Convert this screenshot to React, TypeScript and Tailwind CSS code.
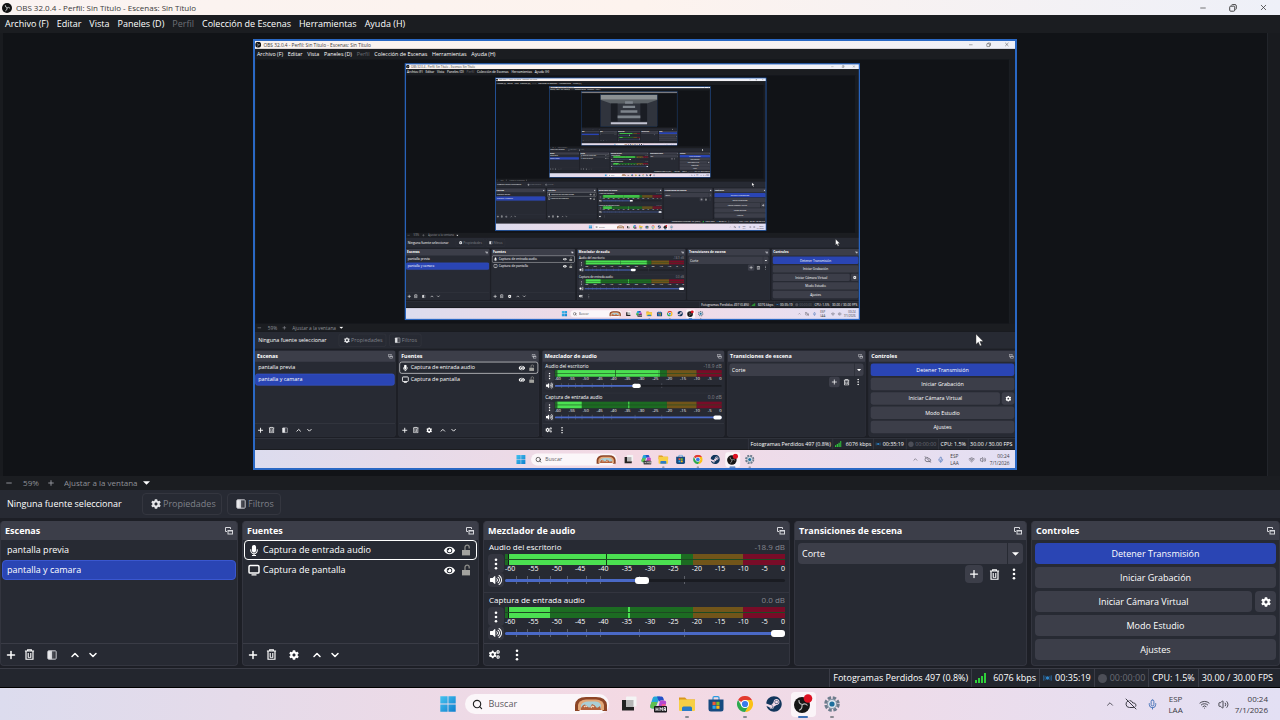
import { useId, useLayoutEffect, useRef, useState } from 'react';
import type { ReactNode } from 'react';
import { ChevronDown, ChevronUp, Minus, Plus, Search, Wifi, Volume2, X, Mic, CloudOff } from 'lucide-react';
import { FaCog, FaCogs, FaEye, FaMicrophone, FaSteam, FaVolumeUp } from 'react-icons/fa';

const MAX_DEPTH = 5;
const SCREEN_W = 1280;
const SCREEN_H = 720;

const MENUS = ['Archivo (F)', 'Editar', 'Vista', 'Paneles (D)', 'Perfil', 'Colección de Escenas', 'Herramientas', 'Ayuda (H)'];
const SCENES = ['pantalla previa', 'pantalla y camara'];
const SCALE = ['-60', '-55', '-50', '-45', '-40', '-35', '-30', '-25', '-20', '-15', '-10', '-5', '0'];
const FADER_TICKS = [4, 8, 12, 16, 22, 29, 34, 48, 64];

interface Channel {
  name: string;
  db: string;
  volume: number;
  level: number;
  peak: number;
  notch?: number;
}

const CHANNELS: Channel[] = [
  { name: 'Audio del escritorio', db: '-18.9 dB', volume: 49, level: 61, peak: 62, notch: 36 },
  { name: 'Captura de entrada audio', db: '0.0 dB', volume: 100, level: 15, peak: 44 },
];

/* ── small icons ─────────────────────────────────── */
const TrashIcon = () => (
  <svg viewBox="0 0 12 12" className="w-[11px] h-[11px]" fill="none" stroke="currentColor">
    <path d="M1 2.2h10M4 2V.8h4V2M2.2 2.5v8.7h7.6V2.5" strokeWidth="1.3" />
    <path d="M4.6 4.4v4.8M7.4 4.4v4.8" strokeWidth="1.2" />
    <path d="M4.4 9.2h3.4" strokeWidth="0.8" />
  </svg>
);

const FilterIcon = () => (
  <svg viewBox="0 0 12 12" className="w-[10px] h-[10px]">
    <defs>
      <linearGradient id="filterFade" x1="0" x2="1">
        <stop offset="0" stopColor="#fff" />
        <stop offset="0.45" stopColor="#d0d1d6" />
        <stop offset="0.5" stopColor="#55575f" />
        <stop offset="1" stopColor="#2a2c34" />
      </linearGradient>
    </defs>
    <rect x="1" y="1" width="10" height="10" rx="1" fill="url(#filterFade)" stroke="#c9cad0" strokeWidth="1.2" />
  </svg>
);

const KebabIcon = () => (
  <svg viewBox="0 0 4 12" className="w-1 h-3" fill="currentColor">
    <circle cx="2" cy="1.7" r="1.3" />
    <circle cx="2" cy="6" r="1.3" />
    <circle cx="2" cy="10.3" r="1.3" />
  </svg>
);

const PopoutIcon = () => (
  <svg viewBox="0 0 8 8" className="w-2 h-2" fill="none" stroke="#d6d7dc" strokeWidth="1">
    <path d="M2 4.5H.5v-4h5V2" />
    <rect x="3" y="3.5" width="4.5" height="3.5" />
    <path d="M3 4h4.5" />
  </svg>
);

const UnlockIcon = () => (
  <svg viewBox="0 0 10 12" className="w-[10px] h-3">
    <path d="M4 6V3.2a2.1 2.1 0 0 1 4.2 0V4.6" fill="none" stroke="#8b8b88" strokeWidth="1.3" />
    <rect x="1" y="6" width="8" height="5.4" fill="#a3a39f" />
  </svg>
);

const MonitorIcon = () => (
  <svg viewBox="0 0 12 12" className="w-3 h-3">
    <rect x="1" y="1.5" width="10" height="7.6" rx="1.2" fill="none" stroke="#fff" strokeWidth="1.5" />
    <path d="M3.5 10.8h5" stroke="#fff" strokeWidth="1.3" />
  </svg>
);

const CaretIcon = () => (
  <svg viewBox="0 0 8 4" className="w-[7px] h-1" fill="#fff">
    <path d="M0 0h8L4 4z" />
  </svg>
);

const RestoreIcon = () => (
  <svg viewBox="0 0 8 8" className="w-2 h-2" fill="none" stroke="#333" strokeWidth="0.9">
    <rect x="0.7" y="2.2" width="5" height="5" rx="1" />
    <path d="M2.4 1.4q.2-.8 1-.8H6q1.3 0 1.3 1.3v2.6q0 .8-.8 1" />
  </svg>
);

const ObsIcon = () => (
  <svg viewBox="0 0 18 18" className="w-[10px] h-[10px]">
    <circle cx="9" cy="9" r="9" fill="#111" />
    <path d="M9.500 8.500Q5.500 8 6 4M9 9q3-2.500 5.500.5M9 9q.5 4-3 5.200" fill="none" stroke="#d8d8d8" strokeWidth="1.500" />
  </svg>
);

/* ── taskbar icons ───────────────────────────────── */
const WindowsIcon = () => (
  <svg viewBox="0 0 16 16" className="w-4 h-4">
    <defs>
      <linearGradient id="winBlue" x1="0" y1="0" x2="1" y2="1">
        <stop offset="0" stopColor="#45c3ef" />
        <stop offset="1" stopColor="#0f7fce" />
      </linearGradient>
    </defs>
    <path d="M.3.3h7.3v7.3H.3zM8.4.3h7.3v7.3H8.4zM.3 8.4h7.3v7.3H.3zM8.4 8.4h7.3v7.3H8.4z" fill="url(#winBlue)" />
  </svg>
);

const SearchArt = () => (
  <svg viewBox="0 0 34 16" className="w-[34px] h-4">
    <path d="M1 15V9Q2 1 12 1h10q10 0 11 8v6h-4l-2-2H7l-2 2z" fill="#8c4526" />
    <path d="M4 14V9q1-5 8-5.500h10q7 .5 8 5.500v5z" fill="#e2a878" />
    <path d="M7 13V9q2-3.500 7-3.500h7q5 0 6 4V13z" fill="#a9cfd6" />
    <path d="M7 12q3-6 6-2t5-2q3 1 4 3t4-1l1 4H7z" fill="#b4623c" />
    <path d="M10 11q2-2 3 0M17 12q1-3 3-1" stroke="#f6dcc0" strokeWidth="1.2" fill="none" />
  </svg>
);

const TaskViewIcon = () => (
  <svg viewBox="0 0 16 16" className="w-4 h-4">
    <rect x="5" y="0.500" width="10.500" height="10" rx="1" fill="#f4f4f4" />
    <path d="M1 4h4v7h8v3.500H1z" fill="#222" />
    <rect x="5" y="4" width="7.500" height="7" fill="#b6b6b6" />
  </svg>
);

const CopilotIcon = () => (
  <svg viewBox="0 0 18 18" className="w-[18px] h-[18px]">
    <path d="M5.500 1.500h5.500L8 9l-2 4.500H3.500q-3 0-2-3.500L3.500 3.500q.5-2 2-2z" fill="#23a7d8" />
    <path d="M1.300 10.500 2.500 7h6L6 13.500H3.500q-3 0-2.200-3z" fill="#5fbf4f" />
    <path d="M8 1.500h4.500q1.500 0 2 2l.5 2h-3q-1.500 0-2 1.500z" fill="#2450c8" />
    <path d="M12 5.500h2.800q3 0 2.200 3l-1.500 5H9l1.500-6q.5-2 1.500-2z" fill="#b548cf" />
    <path d="M13 9h3.800l-1.300 4H12z" fill="#ec5a8d" />
    <rect x="5" y="11" width="13" height="6.500" rx="1" fill="#17171b" />
    <path d="M7 12.500v3.500M7 14.200h2M9 12.500v3.500M11 16v-3.500l1.200 2 1.200-2V16M15 16v-3.500h1.500V16M15 14.500h1.500" stroke="#fff" strokeWidth="0.8" fill="none" />
  </svg>
);

const FolderIcon = () => (
  <svg viewBox="0 0 18 16" className="w-[18px] h-4">
    <path d="M1 1.500h6l2 2h8v4H1z" fill="#d9971c" />
    <rect x="1" y="3.500" width="16" height="11.500" rx="1" fill="#f7cf45" />
    <path d="M4 15v-3q0-1.500 1.500-1.500h7Q14 10.500 14 12v3z" fill="#2a7bc8" />
  </svg>
);

const StoreIcon = () => (
  <svg viewBox="0 0 16 16" className="w-4 h-4">
    <path d="M5 4V2q0-1.300 1.300-1.300h3.400Q11 .7 11 2v2" fill="none" stroke="#2b9be0" strokeWidth="1.200" />
    <path d="M.5 3.500h15V13q0 2.500-2.500 2.500H3Q.5 15.500.5 13z" fill="#164a80" />
    <path d="M4.500 5.800h3.200V9H4.500z" fill="#ef5b35" />
    <path d="M8.300 5.800h3.200V9H8.300z" fill="#7fba28" />
    <path d="M4.500 9.600h3.200v3.200H4.500z" fill="#2fa8ea" />
    <path d="M8.300 9.600h3.200v3.200H8.300z" fill="#fdb913" />
  </svg>
);

const ChromeIcon = () => (
  <svg viewBox="0 0 48 48" className="w-4 h-4">
    <path d="M24 24 3.200 12A24 24 0 0 1 44.800 12z" fill="#e33b2e" />
    <path d="M24 12h20.800A24 24 0 0 1 24 48L34.400 30z" fill="#fbc116" />
    <path d="M13.600 30 3.200 12A24 24 0 0 0 24 48l10.400-18z" fill="#2da94f" />
    <circle cx="24" cy="24" r="12" fill="#fff" />
    <circle cx="24" cy="24" r="9.300" fill="#3a7bea" />
  </svg>
);

const ObsTaskIcon = () => (
  <svg viewBox="0 0 20 20" className="w-5 h-5">
    <circle cx="9" cy="11" r="8" fill="#161616" />
    <path d="M9.500 10.500Q5.500 10 6 6M9 11q3-2.500 5.500.5M9 11q.5 4-3 5.200" fill="none" stroke="#b9b9b9" strokeWidth="1.100" />
    <circle cx="15" cy="4.500" r="4.300" fill="#dd1122" />
  </svg>
);

const SettingsIcon = () => (
  <svg viewBox="0 0 16 16" className="w-4 h-4">
    <circle cx="8" cy="8" r="6.300" fill="none" stroke="#6c7c8c" strokeWidth="3" strokeDasharray="3.300 1.648" />
    <circle cx="8" cy="8" r="5" fill="#8496a6" />
    <circle cx="8" cy="8" r="4" fill="#dfe7ee" />
    <circle cx="8" cy="8" r="2.600" fill="#1c6e9c" />
  </svg>
);

/* ── preview with the captured screen inside ─────── */
// Deepest level: the copies are too small to read, so only their silhouette is drawn
const TunnelEnd = () => (
  <svg viewBox="0 0 764 430" className="w-full h-full">
    <rect width="764" height="430" fill="#30343d" />
    <path d="M0 0h764v70H0z" fill="#8b9093" />
    <path d="M0 70h764L620 120H140z" fill="#5b6166" />
    <path d="M140 120h90v240h-90zM534 120h90v240h-90z" fill="#1a1d24" />
    <path d="M330 90h104v34H330zM300 150h164v30H300zM270 210h224v32H270zM230 280h304v36H230z" fill="#7d848c" />
    <path d="M140 370h484v26H140z" fill="#c4c4d2" />
  </svg>
);

const Preview = ({ depth }: { depth: number }) => {
  const frameRef = useRef<HTMLDivElement>(null);
  const [scale, setScale] = useState(0.596);

  useLayoutEffect(() => {
    const update = () => {
      if (frameRef.current) setScale(frameRef.current.clientHeight / SCREEN_H);
    };
    update();
    window.addEventListener('resize', update);
    return () => window.removeEventListener('resize', update);
  }, []);

  return (
    <div className="flex-1 min-h-0 flex bg-[#191b1f] pl-[3px] pr-3">
      <div className="flex-1 min-w-0 flex justify-center bg-[#111317] border-r border-[#22252b] py-[7px]">
        <div className="relative h-full min-w-0 aspect-video after:absolute after:-inset-px after:border-2 after:border-[#2a68c4] after:pointer-events-none">
          <div ref={frameRef} className="h-full overflow-hidden bg-[#111317]">
            {depth < MAX_DEPTH ? (
              <div
                className="origin-top-left"
                inert
                style={{ width: SCREEN_W, height: SCREEN_H, transform: `scale(${scale})` }}
              >
                <Desktop depth={depth + 1} />
              </div>
            ) : (
              <TunnelEnd />
            )}
          </div>
        </div>
      </div>
    </div>
  );
};

/* ── docks ───────────────────────────────────────── */
const Dock = ({ title, children }: { title: string; children: ReactNode }) => (
  <section className="flex flex-col min-w-0 bg-[#272a33] border-x border-b border-[#33353f] rounded-sm overflow-hidden">
    <header className="h-[19px] shrink-0 bg-[#3c3e49] flex items-center justify-between px-1">
      <h2 className="text-[9px] leading-4 font-bold text-white whitespace-nowrap">{title}</h2>
      <button aria-label={`Desacoplar ${title}`}><PopoutIcon /></button>
    </header>
    {children}
  </section>
);

const Tool = ({ label, children }: { label: string; children: ReactNode }) => (
  <button aria-label={label} className="w-[18px] h-[18px] rounded-sm flex items-center justify-center text-white">
    {children}
  </button>
);

const Toolbar = ({ children }: { children: ReactNode }) => (
  <div className="h-[22px] shrink-0 border-t border-[#3a3c46] flex items-center px-px">{children}</div>
);

const ScenesDock = () => {
  const [selected, setSelected] = useState(1);
  return (
    <Dock title="Escenas">
      <ul className="flex-1 px-px">
        {SCENES.map((s, i) => (
          <li key={s}>
            <button
              onClick={() => setSelected(i)}
              className={`block w-full h-5 px-1 text-left text-[9px] leading-4 text-white rounded-sm border ${
                i === selected ? 'bg-[#2a45b4] border-[#3a57cf]' : 'border-transparent'
              }`}
            >
              {s}
            </button>
          </li>
        ))}
      </ul>
      <Toolbar>
        <Tool label="Agregar escena"><Plus className="w-3 h-3" strokeWidth={3} /></Tool>
        <Tool label="Eliminar escena"><TrashIcon /></Tool>
        <span className="w-[5px]" />
        <Tool label="Filtros de escena"><FilterIcon /></Tool>
        <span className="w-[5px]" />
        <Tool label="Subir escena"><ChevronUp className="w-3 h-3" strokeWidth={3} /></Tool>
        <Tool label="Bajar escena"><ChevronDown className="w-3 h-3" strokeWidth={3} /></Tool>
      </Toolbar>
    </Dock>
  );
};

const SourceRow = ({ icon, name, focused }: { icon: ReactNode; name: string; focused?: boolean }) => (
  <li className={`h-5 flex items-center gap-[3px] pl-[3px] pr-[5px] border rounded-sm ${focused ? 'border-white' : 'border-transparent'}`}>
    {icon}
    <span className="flex-1 whitespace-nowrap">{name}</span>
    <button aria-label="Visibilidad" className="mr-[3px]"><FaEye className="w-[11px] h-[11px]" /></button>
    <button aria-label="Bloquear"><UnlockIcon /></button>
  </li>
);

const SourcesDock = () => (
  <Dock title="Fuentes">
    <ul className="flex-1 px-px text-[9px] leading-4 text-white">
      <SourceRow icon={<FaMicrophone className="w-3 h-[11px]" />} name="Captura de entrada audio" focused />
      <SourceRow icon={<MonitorIcon />} name="Captura de pantalla" />
    </ul>
    <Toolbar>
      <Tool label="Agregar fuente"><Plus className="w-3 h-3" strokeWidth={3} /></Tool>
      <Tool label="Eliminar fuente"><TrashIcon /></Tool>
      <span className="w-[5px]" />
      <Tool label="Propiedades de fuente"><FaCog className="w-[10px] h-[10px]" /></Tool>
      <span className="w-[5px]" />
      <Tool label="Subir fuente"><ChevronUp className="w-3 h-3" strokeWidth={3} /></Tool>
      <Tool label="Bajar fuente"><ChevronDown className="w-3 h-3" strokeWidth={3} /></Tool>
    </Toolbar>
  </Dock>
);

const MixerChannel = ({ channel }: { channel: Channel }) => {
  const id = useId();
  const [volume, setVolume] = useState(channel.volume);
  return (
    <div className="h-[53px] shrink-0 px-1 border-b border-[#33353f]">
      <div className="h-[14px] flex items-center justify-between pl-px">
        <label htmlFor={id} className="text-[8px] leading-3 text-white">{channel.name}</label>
        <span className="text-[8px] leading-3 text-[#85878f]">{channel.db}</span>
      </div>
      <div className="flex gap-px">
        <button aria-label="Opciones de audio" className="w-4 h-[19px] bg-[#343640] text-white rounded-sm flex items-center justify-center">
          <KebabIcon />
        </button>
        <div className="flex-1">
          {/* level meter */}
          <div className="relative h-[11px] flex">
            <div className="w-[67%] bg-[#1c6b22]" />
            <div className="w-[18%] bg-[#71551a]" />
            <div className="flex-1 bg-[#780c28]" />
            <div className="absolute inset-y-0 left-[1%] bg-[#4be051]" style={{ width: `${channel.level}%` }} />
            <div className="absolute inset-y-0 left-[1%] w-px bg-[#16181d]" />
            {channel.notch && <div className="absolute inset-y-0 w-px bg-[#103a14]" style={{ left: `${channel.notch}%` }} />}
            <div className="absolute inset-y-0 w-[2px] bg-[#4be051]" style={{ left: `${channel.peak}%` }} />
            <div className="absolute inset-x-0 top-[5px] h-px bg-[#1d4a22]" />
          </div>
          <div className="h-2 flex justify-between text-[7px] leading-2 text-white">
            {SCALE.map((s) => <span key={s}>{s}</span>)}
          </div>
        </div>
      </div>
      <div className="h-[14px] flex items-center gap-px">
        <button aria-label="Silenciar" className="w-4 h-[14px] bg-[#343640] text-white rounded-sm flex items-center justify-center">
          <FaVolumeUp className="w-3 h-3" />
        </button>
        <div className="relative flex-1 h-3 flex items-center">
          {FADER_TICKS.map((t) => (
            <span key={t} className="absolute top-[2px] h-2 w-px bg-[#5d6069]" style={{ left: `${t}%` }} />
          ))}
          <input
            id={id}
            type="range"
            value={volume}
            onChange={(e) => setVolume(Number(e.target.value))}
            className="relative w-full h-[3px] rounded-sm appearance-none [&::-webkit-slider-thumb]:appearance-none [&::-webkit-slider-thumb]:w-[14px] [&::-webkit-slider-thumb]:h-[7px] [&::-webkit-slider-thumb]:rounded-[3px] [&::-webkit-slider-thumb]:bg-white"
            style={{ background: `linear-gradient(to right, #4a69c6 ${volume}%, #1a1c22 ${volume}%)` }}
          />
        </div>
      </div>
    </div>
  );
};

const MixerDock = () => (
  <Dock title="Mezclador de audio">
    <div className="flex-1 min-h-0 overflow-hidden">
      {CHANNELS.map((c) => <MixerChannel key={c.name} channel={c} />)}
    </div>
    <Toolbar>
      <Tool label="Propiedades avanzadas de audio"><FaCogs className="w-[11px] h-[9px]" /></Tool>
      <span className="w-[5px]" />
      <Tool label="Menú del mezclador"><KebabIcon /></Tool>
    </Toolbar>
  </Dock>
);

const TransitionsDock = () => (
  <Dock title="Transiciones de escena">
    <div className="px-[3px] pt-[3px]">
      <div className="relative">
        <select aria-label="Transición" className="block w-full h-[21px] appearance-none bg-[#3c3e49] rounded-sm pl-1 text-[9px] text-white">
          <option>Corte</option>
          <option>Desvanecimiento</option>
        </select>
        <span className="absolute inset-y-0 right-0 w-4 border-l border-[#272a33] flex items-center justify-center pointer-events-none">
          <CaretIcon />
        </span>
      </div>
      <div className="flex justify-end gap-[2px] pt-px text-white">
        <span className="rounded-sm bg-[#3c3e49]">
          <Tool label="Agregar transición"><Plus className="w-3 h-3" strokeWidth={2.5} /></Tool>
        </span>
        <Tool label="Eliminar transición"><TrashIcon /></Tool>
        <Tool label="Opciones de transición"><KebabIcon /></Tool>
      </div>
    </div>
  </Dock>
);

const ControlButton = ({ active, children }: { active?: boolean; children: ReactNode }) => (
  <button className={`flex-1 h-[21px] rounded-sm text-[9px] leading-4 text-white ${active ? 'bg-[#2a45b4]' : 'bg-[#3c3e49]'}`}>
    {children}
  </button>
);

const ControlsDock = () => (
  <Dock title="Controles">
    <div className="flex flex-col gap-[3px] px-[3px] pt-[3px]">
      <div className="flex"><ControlButton active>Detener Transmisión</ControlButton></div>
      <div className="flex"><ControlButton>Iniciar Grabación</ControlButton></div>
      <div className="flex gap-[3px]">
        <ControlButton>Iniciar Cámara Virtual</ControlButton>
        <button aria-label="Configurar cámara virtual" className="w-[21px] h-[21px] rounded-sm bg-[#3c3e49] text-white flex items-center justify-center">
          <FaCog className="w-[10px] h-[10px]" />
        </button>
      </div>
      <div className="flex"><ControlButton>Modo Estudio</ControlButton></div>
      <div className="flex"><ControlButton>Ajustes</ControlButton></div>
    </div>
  </Dock>
);

/* ── bars ────────────────────────────────────────── */
const TitleBar = () => (
  <div className="h-[15px] shrink-0 flex items-center justify-between px-[2px] bg-linear-to-r from-[#faf3f1] via-[#fdf3ee] to-[#eef0f8]">
    <div className="flex items-center gap-1">
      <ObsIcon />
      <span className="text-[8px] leading-3 text-[#3a3a3a]">OBS 32.0.4 - Perfil: Sin Título - Escenas: Sin Título</span>
    </div>
    <div className="flex items-center gap-[22px] pr-[10px] text-[#333]">
      <button aria-label="Minimizar"><Minus className="w-2 h-2" /></button>
      <button aria-label="Restaurar"><RestoreIcon /></button>
      <button aria-label="Cerrar"><X className="w-[9px] h-[9px]" strokeWidth={2} /></button>
    </div>
  </div>
);

const MenuBar = () => (
  <nav className="h-[18px] shrink-0 flex items-center gap-2 px-[5px] bg-[#1b1d21] text-[9px] leading-4 text-white">
    {MENUS.map((m) => (
      <button key={m} disabled={m === 'Perfil'} className="disabled:text-[#6d6f75]">{m}</button>
    ))}
  </nav>
);

const ZoomBar = () => (
  <div className="h-[14px] shrink-0 flex items-center bg-[#1b1d21] px-[5px] text-[8px] leading-3 text-[#8f9198]">
    <button aria-label="Alejar" className="w-[10px]"><Minus className="w-2 h-2" strokeWidth={3} /></button>
    <span className="w-8 text-center">59%</span>
    <button aria-label="Acercar" className="w-[17px]"><Plus className="w-2 h-2" strokeWidth={3} /></button>
    <div className="relative w-[86px] h-3">
      <select aria-label="Escala de vista previa" className="block w-full h-3 appearance-none text-[8px] leading-3">
        <option>Ajustar a la ventana</option>
        <option>Lienzo (1920x1080)</option>
      </select>
      <span className="absolute inset-y-0 right-0 flex items-center pointer-events-none"><CaretIcon /></span>
    </div>
  </div>
);

const ContextBar = () => (
  <div className="h-7 shrink-0 mb-[3px] flex items-center bg-[#272a33] px-[7px] text-[9px] leading-4">
    <span className="w-[135px] whitespace-nowrap text-white">Ninguna fuente seleccionar</span>
    <button className="h-[22px] w-20 flex items-center gap-[2px] pl-2 border border-[#34363f] rounded-sm text-[#7f8189]">
      <FaCog className="w-[10px] h-[10px] text-[#e4e5e8]" />
      Propiedades
    </button>
    <button className="ml-[5px] h-[22px] w-[54px] flex items-center gap-[2px] pl-2 border border-[#34363f] rounded-sm text-[#7f8189]">
      <FilterIcon />
      Filtros
    </button>
  </div>
);

const Cell = ({ children }: { children: ReactNode }) => (
  <div className="h-full flex items-center gap-[3px] px-[3px] border-l border-[#3a3c46]">{children}</div>
);

const StatusBar = () => (
  <footer className="h-5 shrink-0 mt-[2px] flex items-center justify-end bg-[#23262e] border-t border-[#3a3c46] border-b border-b-black pr-1 text-[9px] leading-4 text-white whitespace-nowrap">
    <Cell>Fotogramas Perdidos 497 (0.8%)</Cell>
    <Cell>
      <svg viewBox="0 0 11 10" className="w-[11px] h-[10px] mr-1" fill="#2fd03a">
        <path d="M0 7h2v3H0zM3 5h2v5H3zM6 3h2v7H6zM9 0h2v10H9z" />
      </svg>
      6076 kbps
    </Cell>
    <Cell>
      <svg viewBox="0 0 12 10" className="w-[9px] h-2" fill="none" stroke="#2b6fa8">
        <circle cx="6" cy="5" r="2.200" fill="#2d86cc" stroke="none" />
        <path d="M3 2.200Q1.800 5 3 7.800M9 2.200q1.200 2.800 0 5.600M1.200 1.200Q-.6 5 1.200 8.800M10.800 1.200q1.800 3.800 0 7.600" />
      </svg>
      00:35:19
    </Cell>
    <Cell>
      <span className="w-[9px] h-[9px] rounded-full bg-[#4c4e57]" />
      <span className="text-[#6a6c74]">00:00:00</span>
    </Cell>
    <Cell>CPU: 1.5%</Cell>
    <Cell>30.00 / 30.00 FPS</Cell>
  </footer>
);

const TaskButton = ({ label, active, running, children }: { label: string; active?: boolean; running?: boolean; children: ReactNode }) => (
  <button
    aria-label={label}
    className={`relative w-[25px] h-[25px] rounded flex items-center justify-center ${active ? 'bg-white/70' : ''}`}
  >
    {children}
    {active && <span className="absolute -bottom-px w-[10px] h-[2px] rounded-full bg-[#3c6fb4]" />}
    {running && <span className="absolute -bottom-px w-1 h-[2px] rounded-full bg-[#8a8a92]" />}
  </button>
);

const Taskbar = () => (
  <div className="h-8 shrink-0 grid grid-cols-[1fr_auto_1fr] items-center bg-linear-to-r from-[#dcdcee] via-[#f4d9e3] to-[#e3e0f4]">
    <span />
    <div className="flex items-center gap-1">
      <TaskButton label="Inicio"><WindowsIcon /></TaskButton>
      <div className="flex items-center w-[144px] h-5 rounded-full bg-[#fbf6f9] pl-[7px] pr-px mr-1">
        <Search className="w-[11px] h-[11px] text-[#222]" strokeWidth={2.5} />
        <input
          aria-label="Buscar"
          placeholder="Buscar"
          className="flex-1 min-w-0 pl-[6px] bg-transparent outline-none text-[9px] leading-4 placeholder-[#5c5a60]"
        />
        <SearchArt />
      </div>
      <TaskButton label="Vista de tareas"><TaskViewIcon /></TaskButton>
      <TaskButton label="Copilot"><CopilotIcon /></TaskButton>
      <TaskButton label="Explorador de archivos" running><FolderIcon /></TaskButton>
      <TaskButton label="Microsoft Store"><StoreIcon /></TaskButton>
      <TaskButton label="Google Chrome" running><ChromeIcon /></TaskButton>
      <TaskButton label="Steam"><FaSteam className="w-4 h-4 text-[#12365c]" /></TaskButton>
      <TaskButton label="OBS Studio" active><ObsTaskIcon /></TaskButton>
      <TaskButton label="Configuración" running><SettingsIcon /></TaskButton>
    </div>
    <div className="flex items-center justify-end pr-3 text-[#3b3b44] text-[8px] leading-[11px]">
      <ChevronUp className="w-[10px] h-[10px] mr-[10px]" />
      <CloudOff className="w-3 h-3 mr-[10px]" />
      <Mic className="w-[11px] h-[11px] mr-[10px] text-[#3e6db5]" />
      <span className="text-center mr-4">ESP<br />LAA</span>
      <Wifi className="w-[11px] h-[11px] mr-2" />
      <Volume2 className="w-[11px] h-[11px] mr-[6px]" />
      <span className="text-right whitespace-nowrap">00:24<br />7/1/2026</span>
    </div>
  </div>
);

/* The pointer only exists in the captured image, not on the live window */
const Pointer = () => (
  <svg viewBox="0 0 12 19" className="absolute left-[1211px] top-[493px] w-[14px] h-[22px]">
    <path d="M.5.5v15l3.500-3.300 2.400 5.600 2.300-1-2.400-5.400h5z" fill="#fff" stroke="#111" strokeWidth="0.600" />
  </svg>
);

const Desktop = ({ depth }: { depth: number }) => (
  <div className="relative h-full flex flex-col overflow-hidden bg-[#1d1f26] font-['Open_Sans',sans-serif]">
    <TitleBar />
    <MenuBar />
    <Preview depth={depth} />
    <ZoomBar />
    <ContextBar />
    <div className="h-[145px] shrink-0 grid grid-cols-[238fr_237fr_307fr_233fr_249fr] gap-1">
      <ScenesDock />
      <SourcesDock />
      <MixerDock />
      <TransitionsDock />
      <ControlsDock />
    </div>
    <StatusBar />
    <Taskbar />
    {depth > 0 && <Pointer />}
  </div>
);

export default function App() {
  return (
    <main className="h-screen">
      <Desktop depth={0} />
    </main>
  );
}
